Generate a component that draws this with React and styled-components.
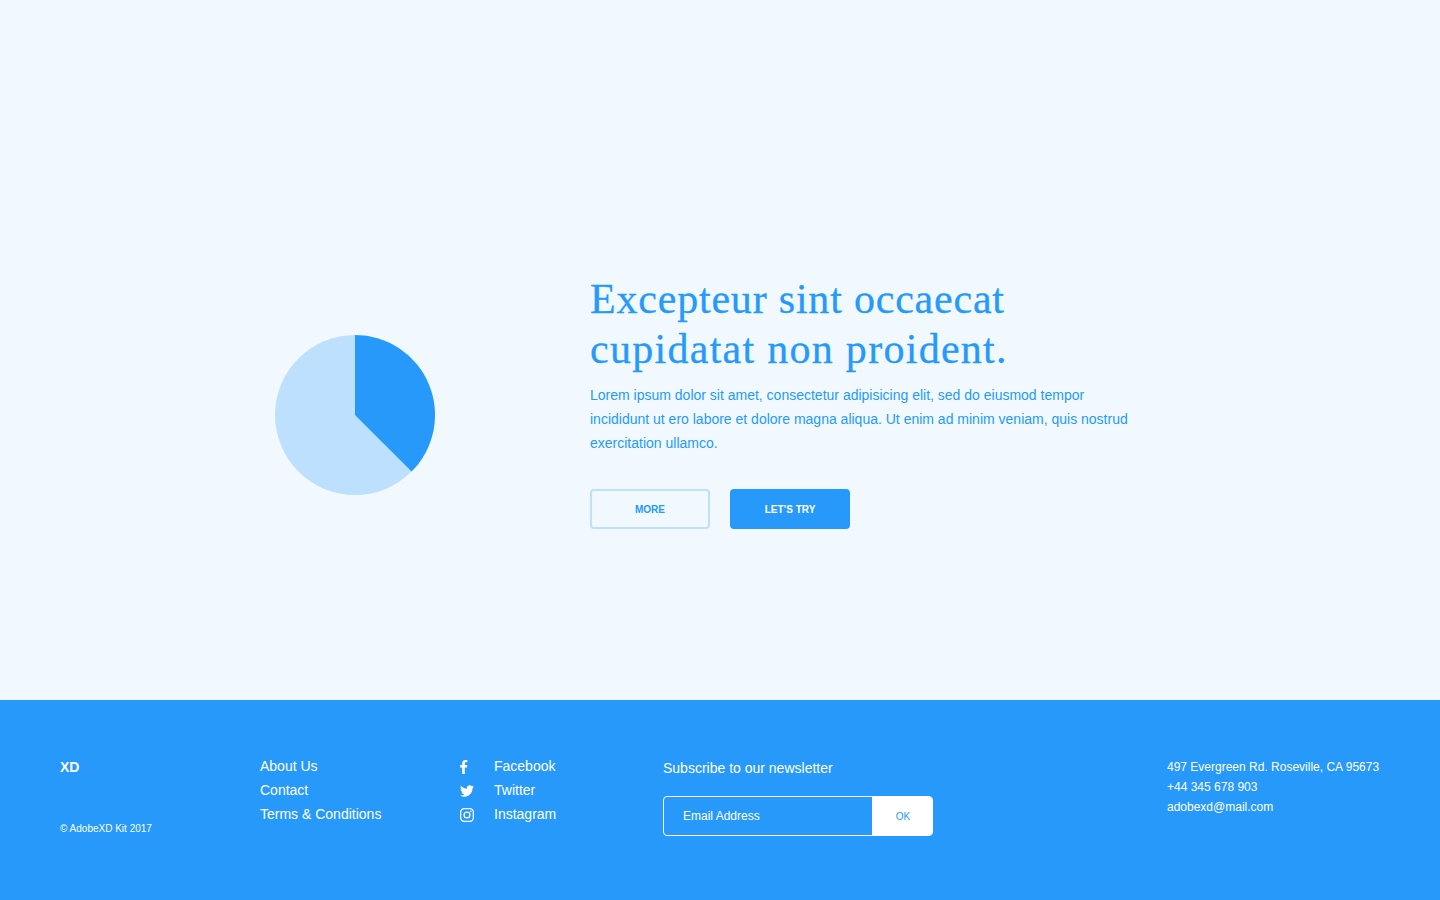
import React from 'react';
import styled, { createGlobalStyle } from 'styled-components';

const blue = '#2699fb';
const paleBlue = '#bce0fd';

const GlobalStyle = createGlobalStyle`
  * { box-sizing: border-box; }
  body { margin: 0; background: #f1f9ff; font-family: Arial, 'Liberation Sans', sans-serif; }
`;

const Page = styled.div`
  width: 1440px;
  height: 900px;
  display: flex;
  flex-direction: column;
  overflow: hidden;
`;

const Hero = styled.main`
  height: 700px;
  display: flex;
  align-items: flex-start;
  padding: 274px 0 0 275px;
  color: ${blue};
`;

const Chart = styled.svg`
  width: 160px;
  height: 160px;
  margin: 61px 155px 0 0;
  flex: none;
`;

const HeroCopy = styled.section`
  width: 580px;
`;

const Title = styled.h1`
  margin: 0;
  font: 400 42px/50px 'Liberation Serif', serif;
  -webkit-text-stroke: 0.3px ${blue};
  white-space: nowrap;
`;

const Line = styled.span`
  display: block;
  letter-spacing: ${({ $spacing = 0 }) => $spacing}px;
`;

const Lead = styled.p`
  margin: 9px 0 0;
  font-size: 14px;
  line-height: 24px;
  white-space: nowrap;
`;

const Actions = styled.div`
  display: flex;
  gap: 20px;
  margin-top: 34px;
`;

const Button = styled.button`
  width: 120px;
  height: 40px;
  padding: 1px 0 0;
  border: 2px solid ${({ $primary }) => ($primary ? blue : paleBlue)};
  border-radius: 4px;
  background: ${({ $primary }) => ($primary ? blue : 'transparent')};
  color: ${({ $primary }) => ($primary ? '#fff' : blue)};
  font: 700 10px/12px Arial, 'Liberation Sans', sans-serif;
`;

const Footer = styled.footer`
  height: 200px;
  display: flex;
  align-items: flex-start;
  padding: 54px 60px 0;
  background: ${blue};
  color: #fff;
  font-size: 14px;
  line-height: 24px;
  white-space: nowrap;
`;

const Brand = styled.div`
  width: 200px;
  height: 87px;
  display: flex;
  flex-direction: column;
  justify-content: space-between;
  padding-top: 1px;
`;

const Logo = styled.strong`
  line-height: 24px;
`;

const Copyright = styled.small`
  font-size: 10px;
  line-height: 12px;
  padding-bottom: 4px;
  height: 18px;
`;

const LinkList = styled.nav`
  width: ${({ $width }) => $width}px;
  display: flex;
  flex-direction: column;
`;

const FooterLink = styled.a`
  display: flex;
  color: inherit;
`;

const SocialIcon = styled.svg`
  width: 14px;
  height: 14px;
  margin: 6px 20px 0 0;
  fill: #fff;
`;

const Newsletter = styled.form`
  width: 504px;
  padding-top: 2px;
`;

const Label = styled.label`
  display: block;
`;

const Field = styled.div`
  width: 270px;
  height: 40px;
  display: flex;
  margin-top: 16px;
  border: 1px solid #fff;
  border-radius: 4px;
  overflow: hidden;
`;

const Email = styled.input`
  width: 208px;
  padding: 0 0 0 19px;
  border: 0;
  outline: 0;
  background: transparent;
  color: #fff;
  font: 12px Arial, 'Liberation Sans', sans-serif;
  &::placeholder { color: #fff; opacity: 1; }
`;

const Submit = styled.button`
  flex: 1;
  padding: 0 0 0 2px;
  border: 0;
  background: #fff;
  color: ${blue};
  font: 10px Arial, 'Liberation Sans', sans-serif;
`;

const Address = styled.address`
  padding-top: 3px;
  font-size: 12px;
  font-style: normal;
  line-height: 20px;
`;

const FacebookIcon = () => (
  <SocialIcon viewBox="0 0 14 14" aria-hidden="true">
    <path d="M2.2 14V7.6H0V5.1h2.2V3.2C2.2 1.1 3.5 0 5.4 0c.9 0 1.7.1 1.9.1v2.2H6C5 2.3 4.8 2.8 4.8 3.5v1.6h2.5L7 7.6H4.8V14z" />
  </SocialIcon>
);

const TwitterIcon = () => (
  <SocialIcon viewBox="0 0 16 16" aria-hidden="true">
    <path d="M16 3c-.6.3-1.2.4-1.9.5.7-.4 1.2-1 1.4-1.8-.6.4-1.3.6-2.1.8-.6-.6-1.5-1-2.4-1-1.7 0-3.2 1.5-3.2 3.3 0 .3 0 .5.1.7-2.7-.1-5.2-1.4-6.8-3.4-.3.5-.4 1-.4 1.7 0 1.1.6 2.1 1.5 2.7-.5 0-1-.2-1.5-.4 0 1.6 1.1 2.9 2.6 3.2-.3.1-.6.1-.9.1-.2 0-.4 0-.6-.1.4 1.3 1.6 2.3 3.1 2.3-1.1.9-2.5 1.4-4.1 1.4H0c1.5.9 3.2 1.5 5 1.5 6 0 9.3-5 9.3-9.3v-.4C15 4.3 15.6 3.7 16 3z" />
  </SocialIcon>
);

const InstagramIcon = () => (
  <SocialIcon viewBox="0 0 14 14" aria-hidden="true">
    <rect x=".65" y=".65" width="12.7" height="12.7" rx="3.5" fill="none" stroke="#fff" strokeWidth="1.3" />
    <circle cx="7" cy="7" r="2.95" fill="none" stroke="#fff" strokeWidth="1.3" />
    <circle cx="10.75" cy="3.25" r=".85" />
  </SocialIcon>
);

export default function App() {
  return (
    <Page>
      <GlobalStyle />
      <Hero>
        <Chart viewBox="0 0 160 160" aria-label="Pie chart">
          <circle cx="80" cy="80" r="80" fill={paleBlue} />
          <path d="M80 80V0a80 80 0 0 1 56.57 136.57z" fill={blue} />
        </Chart>
        <HeroCopy>
          <Title>
            <Line $spacing={0.8}>Excepteur sint occaecat</Line>
            <Line $spacing={1.28}>cupidatat non proident.</Line>
          </Title>
          <Lead>
            <Line>Lorem ipsum dolor sit amet, consectetur adipisicing elit, sed do eiusmod tempor</Line>
            <Line>incididunt ut ero labore et dolore magna aliqua. Ut enim ad minim veniam, quis nostrud</Line>
            <Line>exercitation ullamco.</Line>
          </Lead>
          <Actions>
            <Button>MORE</Button>
            <Button $primary>LET’S TRY</Button>
          </Actions>
        </HeroCopy>
      </Hero>
      <Footer>
        <Brand>
          <Logo>XD</Logo>
          <Copyright>© AdobeXD Kit 2017</Copyright>
        </Brand>
        <LinkList $width={200}>
          <FooterLink>About Us</FooterLink>
          <FooterLink>Contact</FooterLink>
          <FooterLink>Terms &amp; Conditions</FooterLink>
        </LinkList>
        <LinkList $width={203}>
          <FooterLink><FacebookIcon />Facebook</FooterLink>
          <FooterLink><TwitterIcon />Twitter</FooterLink>
          <FooterLink><InstagramIcon />Instagram</FooterLink>
        </LinkList>
        <Newsletter>
          <Label htmlFor="email">Subscribe to our newsletter</Label>
          <Field>
            <Email id="email" placeholder="Email Address" />
            <Submit type="button">OK</Submit>
          </Field>
        </Newsletter>
        <Address>
          <Line>497 Evergreen Rd. Roseville, CA 95673</Line>
          <Line>+44 345 678 903</Line>
          <Line>adobexd@mail.com</Line>
        </Address>
      </Footer>
    </Page>
  );
}
